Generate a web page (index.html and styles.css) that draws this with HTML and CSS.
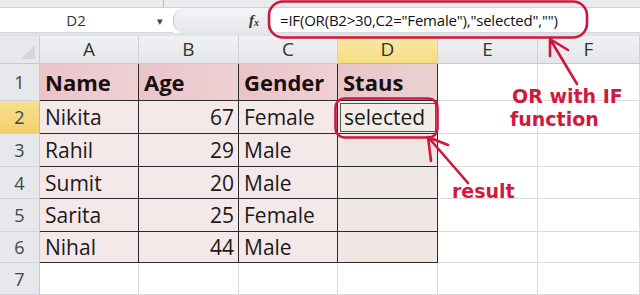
FILE: index.html
```html
<!DOCTYPE html>
<html>
<head>
<meta charset="utf-8">
<link rel="stylesheet" href="styles.css">
</head>
<body>
<div class="app">
  <div class="topstrip"><div class="topsep"></div></div>
  <div class="fbar">
    <div class="namebox"><span class="nb-text">D2</span><span class="nb-arrow">&#9662;</span></div>
    <div class="splitter"><span class="fx"><i>f</i><sub>x</sub></span></div>
    <div class="formula">=IF(OR(B2&gt;30,C2="Female"),"selected","")</div>
  </div>
  <div class="gap"></div>
  <div class="sheet">
    <div class="corner"><span class="tri"></span></div>
    <div class="ch">A</div><div class="ch">B</div><div class="ch">C</div><div class="ch ch-sel">D</div><div class="ch">E</div><div class="ch">F</div>

    <div class="rh">1</div>
    <div class="c hd bl">Name</div><div class="c hd">Age</div><div class="c hd">Gender</div><div class="c hd hd-d">Staus</div><div class="c g"></div><div class="c g"></div>

    <div class="rh rh-sel">2</div>
    <div class="c dt bl">Nikita</div><div class="c dt num">67</div><div class="c dt">Female</div><div class="c dd active">selected</div><div class="c g"></div><div class="c g"></div>

    <div class="rh">3</div>
    <div class="c dt bl">Rahil</div><div class="c dt num">29</div><div class="c dt">Male</div><div class="c dd"></div><div class="c g"></div><div class="c g"></div>

    <div class="rh">4</div>
    <div class="c dt bl">Sumit</div><div class="c dt num">20</div><div class="c dt">Male</div><div class="c dd"></div><div class="c g"></div><div class="c g"></div>

    <div class="rh">5</div>
    <div class="c dt bl">Sarita</div><div class="c dt num">25</div><div class="c dt">Female</div><div class="c dd"></div><div class="c g"></div><div class="c g"></div>

    <div class="rh">6</div>
    <div class="c dt bl">Nihal</div><div class="c dt num">44</div><div class="c dt">Male</div><div class="c dd"></div><div class="c g"></div><div class="c g"></div>

    <div class="rh">7</div>
    <div class="c g"></div><div class="c g"></div><div class="c g"></div><div class="c g"></div><div class="c g"></div><div class="c g"></div>
  </div>

  <svg class="marks" width="640" height="295" viewBox="0 0 640 295">
    <g fill="none" stroke="#d0163f" stroke-width="2.6" stroke-linecap="round" stroke-linejoin="round">
      <rect x="269" y="1.5" width="318" height="36" rx="14" ry="14"/>
      <rect x="335.5" y="98.5" width="102" height="39" rx="9" ry="9"/>
      <path d="M577 84 L550 39 M550 39 L550 56 M550 39 L568 50"/>
      <path d="M468 183 L428 137 M428 137 L431 161 M428 137 L448 145"/>
    </g>
  </svg>
  <div class="note note-or1">OR with IF</div>
  <div class="note note-or2">function</div>
  <div class="note note-res">result</div>
</div>
</body>
</html>
```

FILE: styles.css
```css
html, body {
  margin: 0;
  padding: 0;
  background: #ffffff;
}
.app {
  position: relative;
  width: 640px;
  height: 295px;
  overflow: hidden;
  font-family: "Open Sans", "Liberation Sans", sans-serif;
  color: #1a1a1a;
}
.topstrip {
  height: 7px;
  background: #e9ebee;
  border-bottom: 1px solid #cfd3d8;
  position: relative;
}
.topsep {
  position: absolute;
  left: 163px;
  top: 0;
  width: 1px;
  height: 7px;
  background: #b9bcc0;
}
.fbar {
  display: flex;
  height: 25px;
  background: #ffffff;
}
.namebox {
  width: 173px;
  display: flex;
  align-items: center;
  background: #ffffff;
  border-bottom: 1px solid #d6d9dd;
  box-sizing: border-box;
}
.nb-text {
  width: 152px;
  text-align: center;
  font-size: 15px;
  color: #333;
}
.nb-arrow {
  font-size: 11px;
  color: #444;
  margin-left: 5px;
}
.splitter {
  width: 95px;
  background: linear-gradient(#f4f5f7, #e5e7ea);
  border-radius: 12px 0 0 12px;
  border-left: 1px solid #c4c7cb;
  box-sizing: border-box;
  display: flex;
  align-items: center;
  justify-content: flex-end;
  padding-right: 9px;
}
.fx {
  font-family: "Liberation Serif", serif;
  font-size: 15px;
  color: #333;
  font-weight: bold;
}
.fx sub {
  font-size: 10px;
  font-style: italic;
  vertical-align: -1px;
}
.formula {
  flex: 1;
  background: #ffffff;
  border-left: 1px solid #c8cbcf;
  border-bottom: 1px solid #d6d9dd;
  box-sizing: border-box;
  font-size: 15px;
  line-height: 24px;
  padding-left: 11px;
  color: #111;
  letter-spacing: -0.2px;
  white-space: nowrap;
}
.gap {
  height: 3px;
  background: #dfe2e6;
}
.sheet {
  display: grid;
  grid-template-columns: 40px 99px 100px 99px 100px 100px 102px;
  grid-template-rows: 28px 37px 33px 33px 32px 33px 31px 32px;
}
.corner {
  background: #e6e8eb;
  border-right: 1px solid #cdd0d4;
  border-bottom: 1px solid #c6c9cd;
  box-sizing: border-box;
  position: relative;
}
.tri {
  position: absolute;
  right: 4px;
  bottom: 4px;
  width: 0;
  height: 0;
  border-left: 14px solid transparent;
  border-bottom: 14px solid #d3d6da;
}
.ch {
  background: linear-gradient(#f1f2f4, #e3e5e8);
  border-right: 1px solid #cdd0d4;
  border-bottom: 1px solid #c6c9cd;
  box-sizing: border-box;
  text-align: center;
  font-size: 19px;
  line-height: 27px;
  color: #333;
}
.ch-sel {
  background: linear-gradient(#fbeaa6, #f5dc82);
  border-bottom: 1px solid #e0b94a;
}
.rh {
  background: #e6e8eb;
  border-right: 1px solid #c6c9cd;
  border-bottom: 1px solid #d1d4d8;
  box-sizing: border-box;
  font-size: 18px;
  color: #444;
  display: flex;
  align-items: center;
  justify-content: center;
}
.rh-sel {
  background: linear-gradient(#f9e08e, #f3cf6c);
  border-right: 1px solid #e0b94a;
}
.c {
  box-sizing: border-box;
  display: flex;
  align-items: center;
  padding: 0 5px;
  white-space: nowrap;
}
.g {
  background: #ffffff;
  border-right: 1px solid #dadada;
  border-bottom: 1px solid #dadada;
}
.hd {
  background: linear-gradient(90deg, #eac3c7, #efd0d3);
  border-right: 1px solid #2b2b2b;
  border-bottom: 1px solid #2b2b2b;
  font-weight: bold;
  font-size: 22px;
  color: #1a0f10;
}
.hd-d {
  background: linear-gradient(90deg, #e8c6c8, #ecd1d2);
}
.dt {
  background: #f4e8e8;
  border-right: 1px solid #2b2b2b;
  border-bottom: 1px solid #2b2b2b;
  font-size: 21px;
  color: #1a1a1a;
}
.dd {
  background: #eee7e4;
  border-right: 1px solid #2b2b2b;
  border-bottom: 1px solid #2b2b2b;
  font-size: 21px;
}
.active {
  background: #f2ede8;
  outline: 1px solid #555;
  outline-offset: -3px;
  padding-left: 6px;
}
.num {
  justify-content: flex-end;
  padding-right: 4px;
}
.marks {
  position: absolute;
  left: 0;
  top: 0;
  pointer-events: none;
}
.note {
  position: absolute;
  color: #cf1a3e;
  font-family: "DejaVu Sans", "Open Sans", sans-serif;
  font-weight: bold;
  font-size: 19px;
  line-height: 22px;
  white-space: nowrap;
}
.note-or1 {
  left: 512px;
  top: 85px;
}
.note-or2 {
  left: 510px;
  top: 108px;
}
.note-res {
  left: 452px;
  top: 180px;
}
```
